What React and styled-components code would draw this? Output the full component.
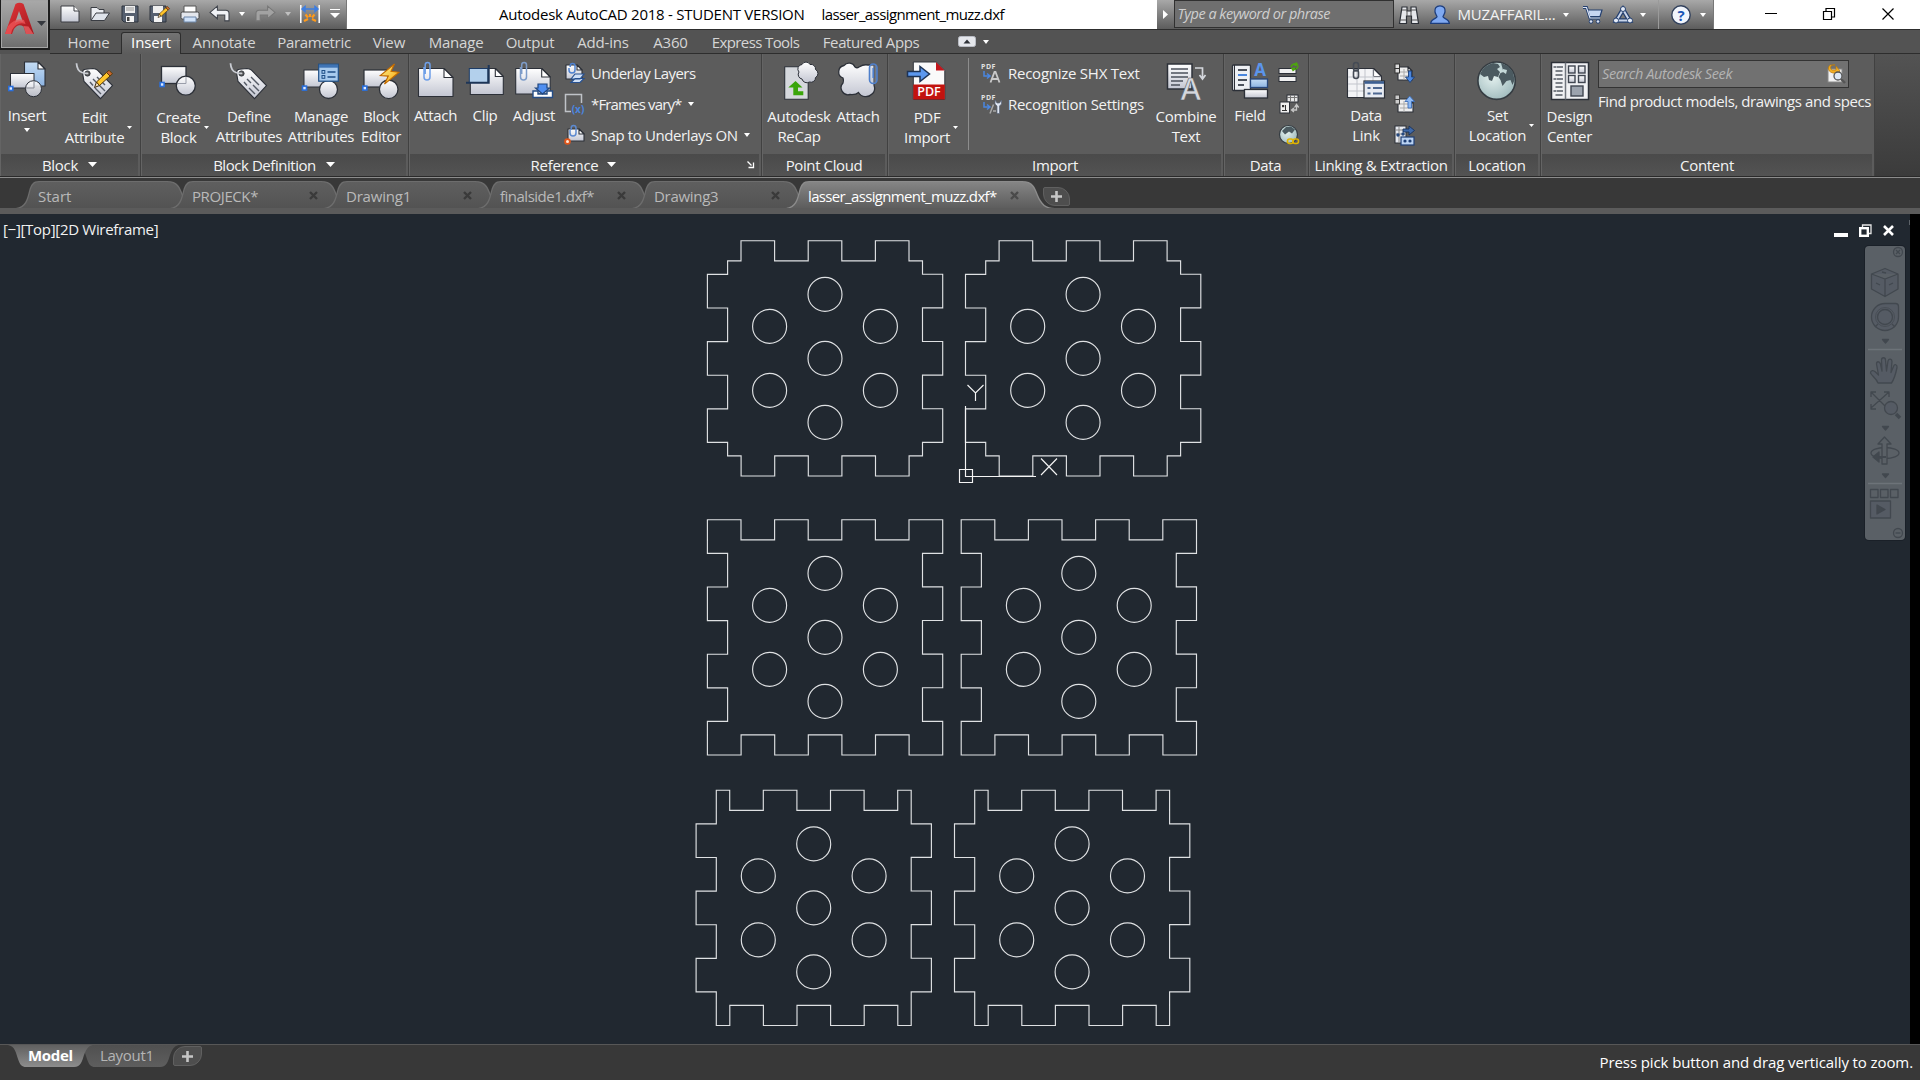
import React from "react";
import styled, { createGlobalStyle, css } from "styled-components";

const Global = createGlobalStyle`
  * { box-sizing: border-box; }
  html, body { margin: 0; padding: 0; background: #383838; }
  body {
    width: 1920px; height: 1080px; overflow: hidden;
    font-family: "Open Sans", "Noto Sans", sans-serif;
    font-size: 15px; line-height: 20px; color: #f2f2f2; letter-spacing: -0.3px;
  }
  button { letter-spacing: inherit; }
  svg { display: block; overflow: visible; flex: none; }
`;

const Window = styled.div`
  width: 1920px; height: 1080px;
  display: flex; flex-direction: column;
  overflow: hidden; position: relative;
`;
const Txt = styled.span`letter-spacing: ${(p) => p.$ls}px; white-space: pre;`;

/* ---------- title bar ---------- */
const Head = styled.header`
  display: flex; height: 54px; flex: none;
  background: #535353;
`;
const AppButton = styled.button`
  width: 50px; height: 50px; flex: none; padding: 3px 0 0 4px;
  display: flex; align-items: flex-start; gap: 3px;
  border: 1px solid #1d1d1d; border-width: 0 2px 2px 1px;
  background: linear-gradient(#a9a9a9, #8f8f8f 50%, #6c6c6c);
  box-shadow: inset 0 0 0 1px #a5a5a5;
`;
const AppArrow = styled.svg`margin-top: 18px;`;
const HeadMain = styled.div`flex: 1; display: flex; flex-direction: column; min-width: 0;`;
const TitleRow = styled.div`
  display: flex; height: 30px; flex: none; background: #fff;
  border-bottom: 1px solid #2d2d2d;
`;
const barFill = css`background: linear-gradient(#a8a8a8, #858585 45%, #5c5c5c);`;
const QuickBar = styled.div`
  ${barFill}
  width: 297px; display: flex; align-items: center; padding: 0 0 2px 9px;
  border-right: 1px solid #777;
`;
const Slot = styled.span`
  width: ${(p) => p.$w}px; display: flex; justify-content: center; flex: none;
`;
const Caption = styled.div`
  flex: 1; display: flex; gap: 17px; padding: 4px 0 0 152px; color: #000; white-space: pre;
`;
const InfoBar = styled.div`
  ${barFill}
  width: 557px; display: flex; align-items: center; border-right: 1px solid #777;
`;
const InfoArrow = styled.div`width: 17px; display: flex; justify-content: center;`;
const Keyword = styled.div`
  width: 225px; height: 28px; align-self: flex-start; padding: 3px 0 0 3px;
  background: #6f6f6f; border: 1px solid #303030; font-style: italic; color: #cfcfcf;
  font-size: 14.5px; letter-spacing: -0.5px;
`;
const UserName = styled.span`width: 107px; padding-bottom: 2px; white-space: nowrap; letter-spacing: -0.2px;`;
const HelpGroup = styled.div`
  display: flex; align-items: center; align-self: stretch;
  border-left: 1px solid #9a9a9a; padding-left: 10px; flex: 1;
`;
const WindowButtons = styled.div`
  width: 206px; display: flex; align-items: center; padding: 0 0 1px 27px;
`;

/* ---------- ribbon tabs ---------- */
const MenuRow = styled.nav`
  display: flex; height: 24px; flex: none; padding-left: 6px;
  border-bottom: 1px solid #2d2d2d;
`;
const MenuTab = styled.a`
  width: ${(p) => p.$w}px; height: 22px; margin-top: 1px; padding-top: 1px; text-align: center;
  white-space: nowrap; color: #d6d6d6; letter-spacing: ${(p) => p.$ls}px;
  ${(p) => p.$on && css`
    color: #fff; height: 22px; margin-top: 2px; padding-top: 0; line-height: 18px;
    background: linear-gradient(#737373, #5c5c5c);
    border: 1px solid #2d2d2d; border-bottom: 0; border-radius: 3px 3px 0 0;
  `}
`;
const MenuTail = styled.div`display: flex; align-items: center; gap: 7px; padding-left: 27px;`;

/* ---------- ribbon ---------- */
const Ribbon = styled.section`
  display: flex; height: 124px; flex: none;
  background: linear-gradient(#535353, #3b3b3b);
  border-bottom: 1px solid #8c8c8c; box-shadow: inset 0 -1px 0 #2a2a2a;
`;
const PanelBox = styled.div`
  width: ${(p) => p.$w}px; height: 122px; display: flex; flex-direction: column; flex: none;
  background: #5c5c5c; border-right: 1px solid #414141; border-left: 1px solid #646464;
`;
const PanelBody = styled.div`
  height: 100px; display: flex; align-items: flex-start; padding: 6px 0 0 ${(p) => p.$pl || 0}px;
  margin-left: -1px;
`;
const PanelTitle = styled.div`
  height: 22px; margin: 0 2px 0 0; display: flex; align-items: center; justify-content: center;
  gap: 10px; padding-bottom: 1px; color: #f4f4f4; white-space: nowrap;
  background: linear-gradient(#4a4a4a, #535353);
`;
const TitleEnd = styled.span`margin-left: auto; padding: 0 5px 0 0;`;
const TitleMid = styled.span`display: flex; align-items: center; gap: 9px; margin-left: auto;`;

const Big = styled.button`
  width: ${(p) => p.$w}px; flex: none; padding: 0; border: 0; background: none;
  font: inherit; color: #f4f4f4; display: flex; flex-direction: column; align-items: center;
`;
const BigLabel = styled.span`
  display: flex; align-items: center; margin-top: ${(p) => p.$t - 1}px; white-space: pre; text-align: center;
`;
const SideArrow = styled.span`width: 5px; margin: 0 -8px 0 3px;`;
const UnderArrow = styled.span`margin-top: 3px;`;
const SmallColumn = styled.div`
  display: flex; flex-direction: column; width: ${(p) => p.$w}px; padding-left: ${(p) => p.$pl || 0}px; flex: none;
`;
const SmallRow = styled.div`
  height: 31px; padding-bottom: 6px; display: flex; align-items: center; gap: ${(p) => p.$gap || 6}px; white-space: nowrap;
`;
const Divider = styled.i`width: 1px; height: 92px; margin: -2px 0 0 2px; background: #8d8d8d;`;
const SeekColumn = styled.div`display: flex; flex-direction: column; width: 276px;`;
const SeekBox = styled.div`
  width: 251px; height: 28px; display: flex; align-items: center; justify-content: space-between;
  padding: 0 2px 0 3px; background: #717171; border: 1px solid #333; font-style: italic; color: #b4b4b4;
  font-size: 14.5px; letter-spacing: -0.4px;
`;
const SeekNote = styled.div`padding-top: 3px; white-space: nowrap; letter-spacing: -0.42px;`;

/* ---------- file tabs ---------- */
const FileTabs = styled.nav`
  height: 36px; flex: none; display: flex; padding: 3px 0 0 16px;
  background: #383838; border-bottom: 6px solid #5b5b5b;
`;
const edge = (w) =>
  `path("M0 27 C9 26 11 18 13 10 C15 3 17 0 23 0 L${w - 33} 0 C${w - 22} 0 ${w - 20} 6 ${w - 17} 14 C${w - 13} 23 ${w - 9} 27 ${w} 27Z")`;
const FileTab = styled.div`
  position: relative; width: ${(p) => p.$w}px; height: 27px; margin-right: -30px; flex: none; z-index: 0;
  display: flex; align-items: center; padding: 2px 36px 0 22px; justify-content: space-between;
  color: ${(p) => (p.$on ? "#fff" : "#b9b9b9")}; white-space: nowrap; letter-spacing: ${(p) => p.$ls}px;
  &::before, &::after { content: ""; position: absolute; z-index: -1; }
  &::before { inset: 0; background: ${(p) => (p.$on ? "#8c8c8c" : "#6d6d6d")}; clip-path: ${(p) => edge(p.$w)}; }
  &::after { inset: 1px 1px 0 1px; clip-path: ${(p) => edge(p.$w - 2)};
    background: ${(p) => (p.$on ? "linear-gradient(#858585,#5d5d5d)" : "linear-gradient(#5f5f5f,#535353)")}; }
`;
const AddTab = styled.div`
  width: 27px; height: 19px; margin: 6px 0 0 18px; display: flex; align-items: center; justify-content: center;
  background: #4e4e4e; border: 1px solid #606060; border-radius: 2px 12px 2px 12px;
  ${(p) => p.$low && css`margin: 1px 0 0 10px; width: 29px; height: 20px; border-radius: 12px 2px 12px 2px;`}
`;

/* ---------- canvas ---------- */
const Stage = styled.main`
  position: relative; height: 830px; flex: none; background: #212830; border-right: 10px solid #000;
`;
const ViewLabel = styled.div`position: absolute; left: 3px; top: 5px;`;
const ViewButtons = styled.div`
  position: absolute; right: 16px; top: 10px; display: flex; align-items: center; gap: 11px;
`;
const NavBar = styled.div`
  position: absolute; left: 1865px; top: 32px; width: 40px; height: 294px; border-radius: 4px;
  background: #5a6066; box-shadow: 0 0 0 1px #1a2028;
`;
const Footer = styled.footer`
  height: 36px; flex: none; display: flex; justify-content: space-between; background: #383838;
  border-top: 1px solid #575757; padding-left: 8px;
`;
const LayoutTabs = styled.nav`display: flex; padding-top: 0;`;
const lowEdge = (w) =>
  `path("M0 0 C7 1 8 8 10 14 C12 20 14 22 18 22 L${w - 20} 22 C${w - 13} 22 ${w - 12} 16 ${w - 10} 10 C${w - 7} 2 ${w - 4} 0 ${w} 0Z")`;
const LayoutTab = styled.div`
  width: ${(p) => p.$w}px; height: 22px; margin-right: -17px; position: relative; z-index: ${(p) => (p.$on ? 2 : 1)};
  clip-path: ${(p) => lowEdge(p.$w)}; padding: 0 0 0 20px;
  background: ${(p) => (p.$on ? "linear-gradient(#606060,#8d8d8d)" : "linear-gradient(#505050,#5e5e5e)")};
  color: ${(p) => (p.$on ? "#fff" : "#b5b5b5")}; font-weight: ${(p) => (p.$on ? 700 : 400)};
  ${(p) => !p.$on && css`padding-left: 23px;`}
`;
const Status = styled.div`padding: 7px 7px 0 0; color: #fff; letter-spacing: -0.1px;`;

/* ---------- drawing primitives ---------- */
const Hidden = styled.svg`position: absolute;`;
const Defs = () => (
  <Hidden width="0" height="0">
    <defs>
      <linearGradient id="pg" x1="0" y1="0" x2="0" y2="1"><stop offset="0" stopColor="#fff" /><stop offset="1" stopColor="#c3c6d2" /></linearGradient>
      <linearGradient id="bl" x1="0" y1="0" x2="0" y2="1"><stop offset="0" stopColor="#c4dcf4" /><stop offset="1" stopColor="#8db4e2" /></linearGradient>
      <linearGradient id="rd" x1="0" y1="0" x2="1" y2="1"><stop offset="0" stopColor="#e2383c" /><stop offset="1" stopColor="#a3161c" /></linearGradient>
      <linearGradient id="bt" x1="0" y1="0" x2="1" y2="1"><stop offset="0" stopColor="#fff59a" /><stop offset="1" stopColor="#f5a300" /></linearGradient>
      <radialGradient id="gl" cx=".4" cy=".4" r=".7"><stop offset="0" stopColor="#e4f1ef" /><stop offset="1" stopColor="#9bb7ba" /></radialGradient>
    </defs>
  </Hidden>
);
const K = "#2c3038";
const Down = ({ w = 6, h = 4, c = "#fff" }) => (
  <svg width={w} height={h} viewBox="0 0 6 4" preserveAspectRatio="none"><path d="M0 0h6L3 4z" fill={c} /></svg>
);
const Ico = ({ w = 44, h = 42, children }) => <svg width={w} height={h} viewBox={`0 0 ${w} ${h}`}>{children}</svg>;
const Sq = ({ x, y }) => <rect x={x + 0.8} y={y + 0.8} width="4" height="4" fill="#dce9ff" stroke="#2a6fdc" strokeWidth="1.6" />;
const Paper = ({ x, y, w, h, f = 8, fill = "url(#pg)" }) => (
  <g stroke={K} strokeWidth="1.1" strokeLinejoin="round">
    <path d={`M${x} ${y}h${w - f}l${f} ${f}v${h - f}h${-w}z`} fill={fill} />
    <path d={`M${x + w - f} ${y}v${f}h${f}z`} fill="#fff" />
  </g>
);
const ClipMark = ({ x, y, c = "#6e9fe8", h = 18 }) => (
  <path d={`M${x} ${y + 5}v${h - 8}a3 3 0 0 0 6 0V${y + 3}a2.4 2.4 0 0 0 -4.8 0v${h - 9}`} fill="none" stroke={c} strokeWidth="1.5" />
);
const Tag = () => (
  <g>
    <path d="M9.500 12.500Q9.500 9.500 12.500 9.300L20 8.500Q22.500 8.500 24.500 10.200L39.500 25.500 27.500 38.700 11 21.500z" fill="url(#pg)" stroke={K} strokeWidth="1.100" />
    <circle cx="14.500" cy="13.500" r="2.600" fill="#5c5c5c" stroke="#33383f" />
    <path d="M3.500 3.300Q4 11 9 12.500T15 13" fill="none" stroke="#c9ccd2" strokeWidth="1.800" />
    <path d="M20 19l4 4M26 25l6 6M17 22l3 3.500M22 28l6 6M24 17l8 8" stroke="#555b66" strokeWidth="1.400" />
  </g>
);
const Pencil = ({ x, y, s = 1 }) => (
  <g transform={`translate(${x} ${y}) scale(${s})`} strokeLinejoin="round">
    <path d="M0 17L2 11.500 5 15z" fill="#f7e3bd" stroke="#3b2a12" />
    <path d="M2 11.500L12 2 15.500 5.500 5 15z" fill="#ffc52b" stroke="#5a3b08" />
    <path d="M12 2l2.500-2.200 3.500 3.500-2.500 2.200z" fill="#c9682f" stroke="#5a3b08" />
  </g>
);
const Doc = ({ children }) => <Ico>{children}</Ico>;

const I = {
  insert: <Doc><Paper x={19.500} y={2} w={20.500} h={24} f={7} fill="url(#bl)" /><rect x="5.500" y="13.500" width="23.500" height="14.500" fill="url(#pg)" stroke={K} /><circle cx="28.500" cy="28.700" r="8" fill="url(#pg)" stroke={K} fillOpacity=".9" /><path d="M29 21v7h-8" fill="none" stroke="#8b8f99" /><Sq x={3} y={25.700} /></Doc>,
  editAttr: <Doc><Tag /><Pencil x={21.500} y={10.500} /></Doc>,
  create: <Doc><rect x="4.500" y="6.500" width="24.500" height="17" fill="url(#pg)" stroke={K} strokeWidth="1.300" /><circle cx="28.800" cy="25.700" r="9.500" fill="url(#pg)" stroke={K} strokeWidth="1.300" /><path d="M29 17v6.500h-8" fill="none" stroke="#9a9eaa" /><Sq x={2.300} y={21.700} /></Doc>,
  define: <Doc><Tag /></Doc>,
  manage: <Doc><rect x="5" y="10" width="20" height="17" fill="url(#pg)" stroke={K} /><circle cx="29.500" cy="29.500" r="9" fill="url(#pg)" stroke={K} strokeWidth="1.300" /><rect x="19.700" y="4.200" width="19.600" height="17" fill="#a8cbee" stroke="#1f4f86" strokeWidth="1.200" /><path d="M20 6.200h19" stroke="#3f74b5" strokeWidth="3" /><rect x="23" y="10.500" width="2.800" height="2.800" fill="none" stroke="#1f4f86" /><rect x="23" y="15.500" width="2.800" height="2.800" fill="none" stroke="#1f4f86" /><path d="M28.500 12h8M28.500 17h8" stroke="#1f4f86" strokeWidth="1.400" /><Sq x={2.700} y={25.300} /></Doc>,
  editor: <Doc><rect x="5" y="10" width="24" height="17" fill="url(#pg)" stroke={K} strokeWidth="1.200" /><circle cx="29.700" cy="29.300" r="9.300" fill="url(#pg)" stroke={K} strokeWidth="1.300" /><path d="M35.500 4L21.300 15.500l8 .6-3.800 8L40 12.300l-8-1z" fill="url(#bt)" stroke="#c26a00" strokeWidth="1.100" /><Sq x={3} y={25.300} /></Doc>,
  attach: <Doc><Paper x={4.500} y={8.500} w={34.500} h={28} f={9} /><ClipMark x={10} y={2} /></Doc>,
  clip: <Doc><Paper x={7.300} y={8.500} w={33} h={26} f={8} /><rect x="6.300" y="8.500" width="18.500" height="14" fill="#b3d0ec" stroke="#1d3c66" /><path d="M3 22.700h22.700V5" fill="none" stroke="#1d3557" strokeWidth="2" /></Doc>,
  adjust: <Doc><Paper x={3.700} y={8.500} w={34.500} h={25.500} f={8.500} /><ClipMark x={8.500} y={2} c="#7d9cc9" /><path d="M21 31h5v3h9v-3h5.500v6.500H21z" fill="#fff" stroke="#254d86" strokeWidth="1.400" /><path d="M26 24h9v4h2.500l-7 6-7-6H26z" fill="#4f8ef0" stroke="#21477f" strokeWidth="1.200" /></Doc>,
  recap: <Doc><Paper x={7.700} y={6.700} w={23.500} h={32.500} f={6} fill="#d5d8dd" /><path d="M26.300 35.300H16.300V27.500H11.300L18.500 21l7 6.500H21v3.800h5.300z" fill="#3aa50a" /><path d="M22 12a4.500 4.500 0 0 1 3-7.500 4.500 4.500 0 0 1 8 0 4.500 4.500 0 0 1 5.500 5 4.500 4.500 0 0 1 0 8 4.500 4.500 0 0 1-6 4.500 5 5 0 0 1-7.500-3 4.500 4.500 0 0 1-3-7z" fill="url(#pg)" stroke={K} /></Doc>,
  cloud: <Doc><path d="M7 18A6.500 6.500 0 0 1 8 5.500 6.500 6.500 0 0 1 19 7q2 1.500 4 0Q28 4 32 5h6v20q2 6-2 9a8.500 8.500 0 0 1-13.500-1.500Q20 35 14 34.500A7 7 0 0 1 7 23q1-2.500 0-5z" fill="url(#pg)" stroke={K} strokeWidth="1.300" /><rect x="33.500" y="4" width="7.500" height="19.500" rx="3.700" fill="#9fb0cb" fillOpacity=".35" stroke="#4e7fcb" strokeWidth="1.600" /><path d="M37.200 8v10" stroke="#4e7fcb" strokeWidth="1.600" /></Doc>,
  pdf: <Doc><path d="M8.300 2h23l8.500 8.500v29H8.300z" fill="#fafafa" stroke="#33363c" /><path d="M31 2v8.500h8.700z" fill="#c3161c" /><rect x="8.300" y="24.500" width="31.500" height="15" fill="#c2130f" /><text x="24" y="36" fill="#fff" fontSize="12.500" fontWeight="600" letterSpacing="0" textAnchor="middle">PDF</text><path d="M2.500 11.500H15V6.500L24.500 14 15 21.500v-5H2.500z" fill="#5c98ef" stroke="#1d3355" strokeWidth="1.500" /></Doc>,
  combine: <Doc><rect x="3.500" y="4" width="24.500" height="25" fill="url(#pg)" stroke={K} strokeWidth="1.500" /><path d="M7 9h17M7 13h17M7 17h17M7 21h12M7 25h9" stroke="#4c525c" strokeWidth="1.400" /><text x="26.500" y="39.500" fill="#d4d7dd" stroke="#55585e" strokeWidth=".6" fontSize="31" fontWeight="600" textAnchor="middle">A</text><path d="M31 8h7.500v10M35.500 15l3 4 3-4" fill="none" stroke="#d4d7dd" strokeWidth="1.700" /></Doc>,
  field: <Doc><rect x="4.500" y="5" width="18" height="25.500" rx="1" fill="#eef0f4" stroke={K} strokeWidth="1.300" /><path d="M6.500 5v25" stroke={K} /><path d="M10 10h9M10 15h9M10 20h9M10 25h6" stroke="#4c525c" strokeWidth="2" /><path d="M10 15h9" stroke="#4a86dd" strokeWidth="2" /><text x="32" y="16" fill="#5b95ec" fontSize="17" fontWeight="700" textAnchor="middle">A</text><rect x="22.500" y="19" width="17" height="8.500" fill="url(#bl)" stroke="#27467a" strokeWidth="1.300" /><rect x="16.500" y="29.500" width="23" height="8.500" fill="url(#pg)" stroke={K} strokeWidth="1.300" /></Doc>,
  dataLink: <Doc><Paper x={3.500} y={8.500} w={34} h={29} f={8} fill="#f3f4f6" /><path d="M4 17h33M4 24h30M4 31h20M13 9v28M21 9v28M29 9v20" stroke="#c2c5cc" /><g fill="none" stroke="#454b55" strokeWidth="1.600"><rect x="9.500" y="2.500" width="5" height="8.500" rx="2.500" /><rect x="9.500" y="10" width="5" height="8.500" rx="2.500" /></g><rect x="20" y="21" width="20.500" height="17" fill="#e7ebf2" stroke={K} strokeWidth="1.200" /><path d="M20.500 22.500h19.500" stroke="#3c5f92" strokeWidth="2.600" /><path d="M23.500 28h3M23.500 33.500h3M29 28h9M29 33.500h9" stroke="#4d6790" strokeWidth="1.800" /></Doc>,
  globe: <Doc><circle cx="20.600" cy="20.700" r="18.700" fill="url(#gl)" stroke="#353c42" strokeWidth="1.600" /><path d="M4 14Q8 5 17 3l5 1 2 3-3 2 3 3-2 5-4-1-2 5-3-1-1-4-4 1zM25 3l7 3 5 6 1.500 8-2 5-2-5-4 1-4 5-2-6-2-3 2-4 3-1z" fill="#4b5a60" /><path d="M27 9l4 1-1 4-3-2z" fill="#c4d8d8" /></Doc>,
  design: <Doc><rect x="3.500" y="2.500" width="37" height="37" fill="#f0f1f4" stroke={K} strokeWidth="1.500" /><path d="M17.500 2.500v37" stroke="#70757e" strokeWidth="1.500" /><path d="M5.500 7h3M9 7h6M7.500 11h7M7.500 15h7M5.500 19h3M9 19h6M7.500 23h7M7.500 27h7M5.500 31h3M9 31h6M7.500 35h7" stroke="#565c66" strokeWidth="1.400" /><g fill="url(#pg)" stroke="#3f4550" strokeWidth="1.400"><rect x="20.500" y="6" width="6.500" height="7" /><rect x="30.500" y="6" width="6.500" height="7" /><rect x="20.500" y="15.500" width="6.500" height="7" /><rect x="30.500" y="15.500" width="6.500" height="7" /><rect x="23" y="26" width="12" height="10" fill="#9ca3ae" /></g></Doc>,
  layers: <Ico w={21} h={22}><Paper x={2} y={3} w={16} h={14} f={5} /><ClipMark x={5} y={1} h={10} c="#4f82d0" /><path d="M7 17l4-5h9l-4 5zM7 20.500l4-4h9l-4 4z" fill="#cfe0f7" stroke="#27508f" strokeWidth="1.200" /></Ico>,
  frames: <Ico w={21} h={22}><path d="M7 18.500H1.500v-17h16V10" fill="none" stroke="#bfc2c7" strokeWidth="1.500" /><text x="14" y="20" fill="#4a86e0" fontSize="10" fontWeight="700" letterSpacing="0" textAnchor="middle">(x)</text></Ico>,
  snap: <Ico w={21} h={22}><Paper x={4} y={5} w={16} h={12} f={5} /><ClipMark x={6} y={1} h={11} c="#5d8ad0" /><circle cx="3.500" cy="17.500" r="3.300" fill="#e2561b" /><circle cx="3.500" cy="17.500" r="1.500" fill="#ffe9d8" /></Ico>,
  shx: <Ico w={19} h={22}><text x="0" y="6.500" fill="#e0e0e0" fontSize="7" fontWeight="700" letterSpacing=".5">PDF</text><path d="M3 9v5h5M6 11.500l3 2.500-3 2.500" fill="none" stroke="#4a86e0" strokeWidth="1.500" /><path d="M9.500 20.500L13.500 10h1l4 10.500M11 17h6" fill="none" stroke="#c9c9c9" strokeWidth="1.800" /></Ico>,
  settings: <Ico w={19} h={22}><text x="0" y="6.500" fill="#e0e0e0" fontSize="7" fontWeight="700" letterSpacing=".5">PDF</text><path d="M3 9v5h5M6 11.500l3 2.500-3 2.500" fill="none" stroke="#4a86e0" strokeWidth="1.500" /><path d="M9 20.500l3.500-9M12 18h3" stroke="#a9a9a9" strokeWidth="1.500" /><path d="M14 7v4l2 2v7.500h2.500V13l2-2V7l-2 3h-2.500z" fill="#dfe6f2" stroke="#59647a" strokeWidth=".7" /></Ico>,
  update: <Ico w={20} h={22}><rect x="0" y="6.500" width="17" height="5" fill="#f0f0f0" stroke={K} /><rect x="0" y="14.500" width="17" height="5" fill="#f0f0f0" stroke={K} /><path d="M12 5a4 4 0 0 1 6-2.500M19 4a4 4 0 0 1-6 3M17 .5l1.500 2.500-3 .5M14.500 9L13 6.500l3-.5" fill="none" stroke="#4da30f" strokeWidth="1.500" /></Ico>,
  ole: <Ico w={20} h={22}><rect x="8" y="2" width="11" height="7" fill="#e7e7e7" stroke={K} /><path d="M8 4.500h11M11.500 2v7M15.500 2v7" stroke="#777" /><rect x="1" y="9" width="9.500" height="11" fill="#f0f0f0" stroke={K} /><rect x="3" y="12" width="2.200" height="2.200" fill="#333" /><path d="M3 17.500h5M6.500 12v6" stroke="#333" /><path d="M13 17h4.500v-5M15.500 14.500l2-3 2.200 3M15 15l-2.500 2 2.500 2" fill="none" stroke="#c6c6c6" strokeWidth="1.300" /></Ico>,
  link: <Ico w={20} h={22}><circle cx="9.500" cy="10.500" r="9" fill="url(#gl)" stroke="#353c42" strokeWidth="1.200" /><path d="M3 7l4-4 5-.5 4 3-3 4-3-2-4 3z" fill="#4b5a60" /><rect x="8.500" y="15" width="5.500" height="4.500" rx="2" fill="none" stroke="#e0b400" strokeWidth="1.600" /><rect x="14" y="15" width="5.500" height="4.500" rx="2" fill="none" stroke="#e0b400" strokeWidth="1.600" /></Ico>,
  dl: <Ico w={21} h={22}><Paper x={4} y={5} w={14} h={13} f={4} fill="#eee" /><path d="M6 10h10M6 14h10M10 7v11" stroke="#aaa" /><rect x="1" y="2" width="4.500" height="4.500" fill="#ddd" stroke="#333" /><rect x="1" y="6.500" width="4.500" height="4.500" fill="#ddd" stroke="#333" /><path d="M14.500 9h3v6h3L16 20.500 11.500 15h3z" fill="#4c87dd" stroke="#1c3e77" strokeWidth=".9" /></Ico>,
  ul: <Ico w={21} h={22}><Paper x={4} y={6} w={15} h={13} f={4} fill="#eee" /><path d="M6 11h11M6 15h12M10 8v11" stroke="#aaa" /><rect x="1" y="2" width="4.500" height="4.500" fill="#ccc" stroke="#444" /><rect x="1" y="6.500" width="4.500" height="4.500" fill="#ccc" stroke="#444" /><path d="M14 15V8.500h-3L15.700 3l4.800 5.500h-3V15z" fill="#8fbaf3" stroke="#3c6db8" strokeWidth=".9" /></Ico>,
  extract: <Ico w={21} h={22}><rect x="1" y="2" width="11" height="17" fill="#e6e9ef" stroke={K} /><path d="M1 6h11M1 10h11M5 2v17" stroke="#888" /><circle cx="4" cy="11" r="1.700" fill="#26497f" /><circle cx="9" cy="10" r="1.700" fill="#26497f" /><path d="M9 5h6V2l5.500 4.500L15 11V8H9z" fill="#3f69a8" stroke="#17315c" strokeWidth=".9" /><rect x="7" y="13" width="13" height="8" fill="#b9d2f2" stroke="#1e3f75" strokeWidth="1.200" /><circle cx="11" cy="17" r="1.600" fill="#1e3f75" /><circle cx="16" cy="17" r="1.600" fill="#1e3f75" /></Ico>,
};

const Lbl = ({ t, children, arrow }) => (
  <BigLabel $t={t}>{children}{arrow && <SideArrow><Down w={5} h={3} /></SideArrow>}</BigLabel>
);
const Tool = ({ w, icon, text, t = 5, arrow, under }) => (
  <Big $w={w}>{I[icon]}<Lbl t={t} arrow={arrow}>{text}</Lbl>{under && <UnderArrow><Down w={6} h={4} /></UnderArrow>}</Big>
);
const Panel = ({ w, title, more, corner, pl, ls = -0.3, children }) => (
  <PanelBox $w={w}>
    <PanelBody $pl={pl}>{children}</PanelBody>
    <PanelTitle>
      {corner ? (
        <>
          <TitleMid><Txt $ls={ls}>{title}</Txt>{more && <Down w={9} h={5} />}</TitleMid>
          <TitleEnd><svg width="7" height="7" viewBox="0 0 7 7"><path d="M.5.500l4 4M6.500 1.500v5h-5" fill="none" stroke="#fff" strokeWidth="1.300" /></svg></TitleEnd>
        </>
      ) : (
        <><Txt $ls={ls}>{title}</Txt>{more && <Down w={9} h={5} />}</>
      )}
    </PanelTitle>
  </PanelBox>
);

/* ---------- part geometry ---------- */
const U = 33.6, D = 20.2, S = 235.3;
const stops = [U, 2 * U, 3 * U, 4 * U, 5 * U, 6 * U];
const side = (kind, sideways) => {
  const raised = kind === "cross" || (kind === "mixed" && sideways);
  const start = kind === "square" ? [0, 0] : raised ? [D, D] : [D, 0];
  const pts = [start];
  let v = start[1];
  stops.forEach((s) => {
    pts.push([s, v]);
    v = v ? 0 : D;
    pts.push([s, v]);
  });
  return pts;
};
const outline = (kind) => {
  const top = side(kind, false);
  const lat = kind === "mixed" ? side("cross", true).slice(1) : side(kind, true).slice(1);
  const right = lat.map(([a, b]) => [S - b, a]);
  const bottom = top.map(([a, b]) => [S - a, S - b]);
  const left = lat.map(([a, b]) => [b, S - a]);
  const tail = kind === "square" ? [S, 0] : kind === "cross" ? [S - D, D] : [S - D, 0];
  const all = [...top, tail, ...right, ...bottom, [S - tail[0], S - tail[1]], ...left];
  return "M" + all.map((p) => p.map((n) => n.toFixed(2)).join(" ")).join("L") + "Z";
};
const holes = [[0, 0], [0, -64], [0, 64], [-55.4, -32], [55.4, -32], [-55.4, 32], [55.4, 32]];
const parts = [
  ["cross", 707.4, 240.7], ["cross", 965.5, 240.7],
  ["square", 707.4, 519.7], ["square", 961.2, 519.7],
  ["mixed", 696.1, 790.2], ["mixed", 954.5, 790.2],
];
const Drawing = () => (
  <svg width="1910" height="830" viewBox="0 214 1910 830" fill="none" stroke="#dfe1e3" strokeWidth="1.150">
    {parts.map(([k, x, y]) => (
      <g key={k + x} transform={`translate(${x} ${y})`}>
        <path d={outline(k)} />
        {holes.map(([a, b]) => <circle key={a + "," + b} cx={117.600 + a} cy={117.700 + b} r="17" />)}
      </g>
    ))}
    <g stroke="#f4f4f4">
      <path d="M965.500 406v70.500h70.500M959.500 469.500h13v13h-13z" />
      <path d="M967.500 385l8 8 8-8M975.500 393v8M1041 458.500l16 16.500M1057 458.500l-16 16.500" />
    </g>
    <path d="M1909.500 220v5" stroke="#5c6268" strokeWidth="1" />
  </svg>
);
const NavIcons = () => (
  <svg width="40" height="294" viewBox="0 0 40 294" fill="none" stroke="#42484f" strokeWidth="1.300" strokeLinejoin="round">
    <circle cx="33" cy="6" r="4.500" /><path d="M31 4l4 4M35 4l-4 4" />
    <path d="M20 22.500L33 28v15l-13 7.500L6.500 43V28zM6.500 28L20 33l13-5M20 33v17M17 26l4 1M11 37l4 2M24 39l4-2" fill="#555b64" />
    <path d="M20 57.500h10.500a3 3 0 0 1 3 3V71A13.500 13.500 0 1 1 20 57.500z" fill="#555b64" /><circle cx="20" cy="71" r="7.500" /><circle cx="20" cy="71" r="9.500" strokeWidth=".7" /><path d="M13 78l-3 3M27 78l3 3" />
    <path d="M17.500 93.500h6l-3 3.500z" fill="#42484f" />
    <path d="M3 103.500h34M3 237.500h34" stroke="#6d7379" />
    <path d="M13 137c-2-5-6-7-7.500-10 0-3 3-3 5-1l3 3-2-11c0-3 3-3 4 0l1.500 7-.5-11c0-3 4-3 4 0l1 11 1.500-10c1-3 4-2 4 .5l-1 11 2.500-6c1-3 4-2 3.500 1-1 5-3 12-5.500 15.500z" fill="#555b64" />
    <path d="M6 146l18 18M24 146L6 162M6 151v-5h5M19 146h5v5M6 158v5h5" /><circle cx="26" cy="162" r="6.500" fill="#555b64" /><path d="M31 168l4 4" strokeWidth="3.500" />
    <path d="M17.500 180.500h6l-3 3.500zM17.500 228h6l-3 3.500z" fill="#42484f" />
    <ellipse cx="20" cy="207" rx="14" ry="5.500" /><path d="M17 218v-20h-4l6.500-7 6.500 7h-4v20z" fill="#5a6066" /><path d="M9 211h12" strokeWidth="2" /><path d="M14 206l-6 5 6 5z" fill="#42484f" />
    <rect x="5.500" y="243.500" width="7.500" height="8" /><rect x="15.500" y="243.500" width="7.500" height="8" /><rect x="25.500" y="243.500" width="7.500" height="8" />
    <rect x="5.500" y="255" width="20" height="17" fill="#555b64" /><path d="M12 259v9l8-4.500z" fill="#42484f" />
    <circle cx="33" cy="287" r="4.500" /><path d="M30.500 287h5" />
  </svg>
);

const menu = [["Home", 65, -0.1], ["Insert", 60, -0.1, 1], ["Annotate", 86, -0.2], ["Parametric", 94, -0.3], ["View", 56, -0.1], ["Manage", 78, -0.2], ["Output", 70, -0.2], ["Add-ins", 76, -0.2], ["A360", 59, -0.2], ["Express Tools", 111, -0.6], ["Featured Apps", 120, -0.4]];
const files = [["Start", 0], ["PROJECK*", -0.4], ["Drawing1", -0.2], ["finalside1.dxf*", -0.5], ["Drawing3", -0.3], ["lasser_assignment_muzz.dxf*", -0.65, 1]];
const CloseX = ({ c }) => <svg width="9" height="9" viewBox="0 0 9 9"><path d="M1 1l7 7M8 1L1 8" stroke={c} strokeWidth="2.400" /></svg>;
const Plus = () => <svg width="11" height="11" viewBox="0 0 11 11"><path d="M5.500 0v11M0 5.500h11" stroke="#c6c6c6" strokeWidth="2.600" /></svg>;

const Quick = () => (
  <QuickBar>
    <Slot $w={22}><svg width="20" height="18" viewBox="0 0 20 18"><path d="M1 1h13l5 5v11H1z" fill="url(#pg)" stroke="#3a3d43" /><path d="M14 1v5h5" fill="#fff" stroke="#3a3d43" /></svg></Slot>
    <Slot $w={38}><svg width="20" height="16" viewBox="0 0 20 16"><path d="M1 14V1.500h6l2 2h5V7" fill="#eceef2" stroke="#3a3d43" /><path d="M1 14.500L6 7h13.500l-5 7.500z" fill="#dfe3ea" stroke="#3a3d43" /></svg></Slot>
    <Slot $w={21}><svg width="18" height="18" viewBox="0 0 18 18"><path d="M1 1h16v16H3l-2-2z" fill="#566070" stroke="#2f353f" /><rect x="4" y="1" width="10" height="7" fill="#eee" /><path d="M5 3h8M5 5h8" stroke="#999" /><rect x="5" y="11" width="8" height="6" fill="#f4f4f4" /><rect x="6" y="12" width="2.500" height="4" fill="#444" /></svg></Slot>
    <Slot $w={38}><svg width="20" height="18" viewBox="0 0 20 18"><path d="M1 1h16v16H3l-2-2z" fill="#566070" stroke="#2f353f" /><rect x="4" y="1" width="10" height="7" fill="#eee" /><rect x="5" y="11" width="8" height="6" fill="#f4f4f4" /><Pencil x={9} y={1.500} s={0.650} /></svg></Slot>
    <Slot $w={23}><svg width="20" height="18" viewBox="0 0 20 18"><path d="M4 1h12v7H4z" fill="#fff" stroke="#555" /><rect x="1" y="7" width="18" height="7" rx="1.500" fill="#e3e6ec" stroke="#444" /><path d="M4 12h12v5H4z" fill="#cfe1f8" stroke="#6d86a8" /></svg></Slot>
    <Slot $w={37}><svg width="19" height="16" viewBox="0 0 18 15"><path d="M7 0L0 6l7 6V8.500h7V14h4V7q0-3-3-3H7z" fill="#f0f2f6" stroke="#3f434b" /></svg></Slot>
    <Slot $w={7}><Down w={6} h={4} /></Slot>
    <Slot $w={40}><svg width="19" height="16" viewBox="0 0 18 15"><path d="M11 0l7 6-7 6V8.500H4V14H0V7q0-3 3-3h8z" fill="#a2a2a2" stroke="#777" /></svg></Slot>
    <Slot $w={5}><Down w={6} h={4} c="#c0c0c0" /></Slot>
    <Slot $w={40}><svg width="20" height="18" viewBox="0 0 20 18"><path d="M.8 0v18M19.200 0v18" stroke="#fff" strokeWidth="1.500" /><path d="M2 4h16M2 4l3-2.500v5zM18 4l-3-2.500v5z" stroke="#3d7de0" fill="#3d7de0" strokeWidth="1.500" /><path d="M10 9v3M5.500 9.500l2.500 3M14.500 9.500l-2.500 3M4 16l4-2M16 16l-4-2" stroke="#ff9a1a" strokeWidth="2.200" /></svg></Slot>
    <Slot $w={10}><svg width="10" height="9" viewBox="0 0 10 9"><path d="M0 .5h10" stroke="#fff" /><path d="M0 4h10L5 9z" fill="#fff" /></svg></Slot>
  </QuickBar>
);
const Info = () => (
  <InfoBar>
    <InfoArrow><svg width="5" height="9" viewBox="0 0 5 9"><path d="M0 0v9l5-4.500z" fill="#fff" /></svg></InfoArrow>
    <Keyword>Type a keyword or phrase</Keyword>
    <Slot $w={31}><svg width="20" height="18" viewBox="0 0 20 18"><path d="M3 1h5v4h4V1h5l2.500 16.500h-7V10h-5v7.500h-7z" fill="#e6e8ec" stroke="#2d3138" strokeWidth="1.200" /><path d="M8 5v5M12 5v5M3 4h5M12 4h5M1 14h6M13 14h6" stroke="#555" /></svg></Slot>
    <Slot $w={30}><svg width="20" height="19" viewBox="0 0 20 19"><path d="M10 .8c4 0 5.500 3 5 6-.3 2-1.500 3.500-2 5 0 1.500 6 2 6.300 6.500H.7C1 13.800 7 13.300 7 11.800c-.5-1.500-1.700-3-2-5-.5-3 1-6 5-6z" fill="#7fa9f2" stroke="#1d3d7c" strokeWidth="1.300" /></svg></Slot>
    <Slot $w={3} />
    <UserName>MUZAFFARIL...</UserName>
    <Slot $w={8}><Down w={6} h={4} /></Slot>
    <Slot $w={45}><svg width="20" height="18" viewBox="0 0 20 18"><path d="M0 1.500h3.500L7 12h10" fill="none" stroke="#25406f" strokeWidth="3" /><path d="M4.500 4H19l-2 6.500H6.500z" fill="#c6d6f2" stroke="#25406f" strokeWidth="1.200" /><path d="M0 1.500h3.500L7 12h10" fill="none" stroke="#dde6f6" strokeWidth="1.200" /><circle cx="8" cy="15.500" r="1.800" fill="#dde6f6" stroke="#25406f" /><circle cx="15" cy="15.500" r="1.800" fill="#dde6f6" stroke="#25406f" /></svg></Slot>
    <Slot $w={16}><svg width="20" height="18" viewBox="0 0 20 18"><path d="M10 3.500L3.500 14.500h13z" fill="none" stroke="#25406f" strokeWidth="4.500" /><path d="M10 3.500L3.500 14.500h13z" fill="none" stroke="#c9d5ea" strokeWidth="2" /><g fill="#e4ebf7" stroke="#25406f"><circle cx="10" cy="3" r="2.500" /><circle cx="3" cy="14.500" r="2.500" /><circle cx="17" cy="14.500" r="2.500" /></g></svg></Slot>
    <Slot $w={24}><Down w={6} h={4} /></Slot>
    <Slot $w={3} />
    <HelpGroup>
      <Slot $w={24}><svg width="20" height="20" viewBox="0 0 20 20"><circle cx="10" cy="10" r="9.200" fill="#f1f5fc" stroke="#31405c" strokeWidth="1.400" /><text x="10" y="15.500" fontSize="15" fontWeight="700" fill="#1c55b5" textAnchor="middle">?</text></svg></Slot>
      <Slot $w={20}><Down w={6} h={4} /></Slot>
    </HelpGroup>
  </InfoBar>
);

export default function App() {
  return (
    <Window>
      <Global />
      <Defs />
      <Head>
        <AppButton>
          <svg width="29" height="32" viewBox="0 0 29 32"><path d="M0 31L10.500 1Q14.500-1.500 18.500 1L29 31h-8l-2.500-7.500Q13 20 9 26l-2 5z" fill="url(#rd)" /><path d="M14 8l4 11q-5-2-8 1z" fill="#a5a5a5" /><path d="M0 31l3-8q8-9 16-6l1.500 4Q12 18 7 27l-1 4z" fill="#f0575a" opacity=".75" /><path d="M21 31l-2.500-8 5 .5 5 7.500z" fill="#ee6a6c" opacity=".7" /></svg>
          <AppArrow width="9" height="5" viewBox="0 0 9 5"><path d="M0 0h9L4.500 5z" fill="#35383e" /></AppArrow>
        </AppButton>
        <HeadMain>
          <TitleRow>
            <Quick />
            <Caption>
              <Txt $ls={-0.25}>Autodesk AutoCAD 2018 - STUDENT VERSION</Txt>
              <Txt $ls={-0.6}>lasser_assignment_muzz.dxf</Txt>
            </Caption>
            <Info />
            <WindowButtons>
              <Slot $w={59}><svg width="12" height="12" viewBox="0 0 12 12"><path d="M0 5.500h12" stroke="#000" /></svg></Slot>
              <Slot $w={58}><svg width="12" height="12" viewBox="0 0 12 12"><path d="M.5 3.500h8v8h-8zM3 3.500v-3h8.500v8.500h-3" fill="none" stroke="#000" strokeWidth="1.200" /></svg></Slot>
              <Slot $w={60}><svg width="12" height="12" viewBox="0 0 12 12"><path d="M.5.500l11 11M11.500.500l-11 11" stroke="#000" strokeWidth="1.200" /></svg></Slot>
            </WindowButtons>
          </TitleRow>
          <MenuRow>
            {menu.map(([n, w, ls, on]) => <MenuTab key={n} $w={w} $ls={ls} $on={on}>{n}</MenuTab>)}
            <MenuTail>
              <svg width="18" height="11" viewBox="0 0 18 11"><rect x=".5" y=".5" width="17" height="10" rx="2" fill="#e5e7ec" stroke="#b9bcc4" /><path d="M5.500 7.500L9 3.500l3.500 4z" fill="#2f3238" /></svg>
              <Down w={6} h={4} />
            </MenuTail>
          </MenuRow>
        </HeadMain>
      </Head>

      <Ribbon>
        <Panel w={141} title="Block" more>
          <Tool w={54} icon="insert" text="Insert" t={4} under />
          <Tool w={81} icon="editAttr" text={"Edit\nAttribute"} t={6} arrow />
        </Panel>
        <Panel w={268} title="Block Definition" more ls={-0.45}>
          <Tool w={75} icon="create" text={"Create\nBlock"} t={6} arrow />
          <Tool w={66} icon="define" text={"Define\nAttributes"} />
          <Tool w={78} icon="manage" text={"Manage\nAttributes"} />
          <Tool w={42} icon="editor" text={"Block\nEditor"} />
        </Panel>
        <Panel w={353} title="Reference" more corner>
          <Tool w={53} icon="attach" text="Attach" t={4} />
          <Tool w={46} icon="clip" text="Clip" t={4} />
          <Tool w={52} icon="adjust" text="Adjust" t={4} />
          <SmallColumn $w={200} $pl={4}>
            <SmallRow>{I.layers}<Txt $ls={-0.55}>Underlay Layers</Txt></SmallRow>
            <SmallRow>{I.frames}<Txt $ls={-0.85}>*Frames vary*</Txt><Down w={6} h={4} /></SmallRow>
            <SmallRow>{I.snap}<Txt $ls={-0.4}>Snap to Underlays ON</Txt><Down w={6} h={4} /></SmallRow>
          </SmallColumn>
        </Panel>
        <Panel w={126} title="Point Cloud" ls={-0.4}>
          <Tool w={74} icon="recap" text={"Autodesk\nReCap"} />
          <Tool w={44} icon="cloud" text="Attach" />
        </Panel>
        <Panel w={336} title="Import">
          <Tool w={78} icon="pdf" text={"PDF\nImport"} t={6} arrow />
          <Divider />
          <SmallColumn $w={187} $pl={12}>
            <SmallRow $gap={8}>{I.shx}<Txt $ls={-0.25}>Recognize SHX Text</Txt></SmallRow>
            <SmallRow $gap={8}>{I.settings}<Txt $ls={-0.3}>Recognition Settings</Txt></SmallRow>
          </SmallColumn>
          <Tool w={60} icon="combine" text={"Combine\nText"} />
        </Panel>
        <Panel w={85} title="Data">
          <Tool w={52} icon="field" text="Field" t={4} />
          <SmallColumn $w={28} $pl={3}>
            <SmallRow>{I.update}</SmallRow><SmallRow>{I.ole}</SmallRow><SmallRow>{I.link}</SmallRow>
          </SmallColumn>
        </Panel>
        <Panel w={146} title="Linking & Extraction" pl={29}>
          <Tool w={56} icon="dataLink" text={"Data\nLink"} t={4} />
          <SmallColumn $w={28}>
            <SmallRow>{I.dl}</SmallRow><SmallRow>{I.ul}</SmallRow><SmallRow>{I.extract}</SmallRow>
          </SmallColumn>
        </Panel>
        <Panel w={86} title="Location">
          <Tool w={85} icon="globe" text={"Set\nLocation"} t={4} arrow />
        </Panel>
        <Panel w={334} title="Content">
          <Tool w={57} icon="design" text={"Design\nCenter"} />
          <SeekColumn>
            <SeekBox>
              Search Autodesk Seek
              <svg width="20" height="20" viewBox="0 0 20 20"><rect x="2" y="5" width="14" height="13" fill="#f1f1f1" stroke="#888" /><path d="M9 1C5 0 3 4 6 6h4V2l4 5-4 5V9C4 10 0 5 4 1z" fill="#f2ae24" stroke="#b97a0b" strokeWidth=".7" /><circle cx="12" cy="12" r="4" fill="#dfe9f5" stroke="#555" strokeWidth="1.300" /><path d="M15 15l4 4" stroke="#555" strokeWidth="2.400" /></svg>
            </SeekBox>
            <SeekNote>Find product models, drawings and specs</SeekNote>
          </SeekColumn>
        </Panel>
      </Ribbon>

      <FileTabs>
        {files.map(([n, ls, on]) => (
          <FileTab key={n} $w={on ? 269 : 184} $ls={ls} $on={on}>{n}{n !== "Start" && <CloseX c={on ? "#4a4a4a" : "#3a3a3a"} />}</FileTab>
        ))}
        <AddTab><Plus /></AddTab>
      </FileTabs>

      <Stage>
        <Drawing />
        <ViewLabel>[−][Top][2D Wireframe]</ViewLabel>
        <ViewButtons>
          <svg width="14" height="12" viewBox="0 0 14 12"><rect x="0" y="8" width="14" height="4" fill="#fff" /></svg>
          <svg width="13" height="13" viewBox="0 0 13 13"><path d="M3.500 3V1h8.500v8.500h-2" fill="none" stroke="#e6e6e6" strokeWidth="1.300" /><rect x="1.200" y="4.200" width="7.600" height="7.600" fill="none" stroke="#fff" strokeWidth="2.400" /></svg>
          <Slot $w={11}><svg width="11" height="11" viewBox="0 0 11 11"><path d="M1 1l9 9M10 1l-9 9" stroke="#fff" strokeWidth="2.600" /></svg></Slot>
        </ViewButtons>
        <NavBar><NavIcons /></NavBar>
      </Stage>

      <Footer>
        <LayoutTabs>
          <LayoutTab $w={86} $on>Model</LayoutTab>
          <LayoutTab $w={103}>Layout1</LayoutTab>
          <AddTab $low><Plus /></AddTab>
        </LayoutTabs>
        <Status>Press pick button and drag vertically to zoom.</Status>
      </Footer>
    </Window>
  );
}
